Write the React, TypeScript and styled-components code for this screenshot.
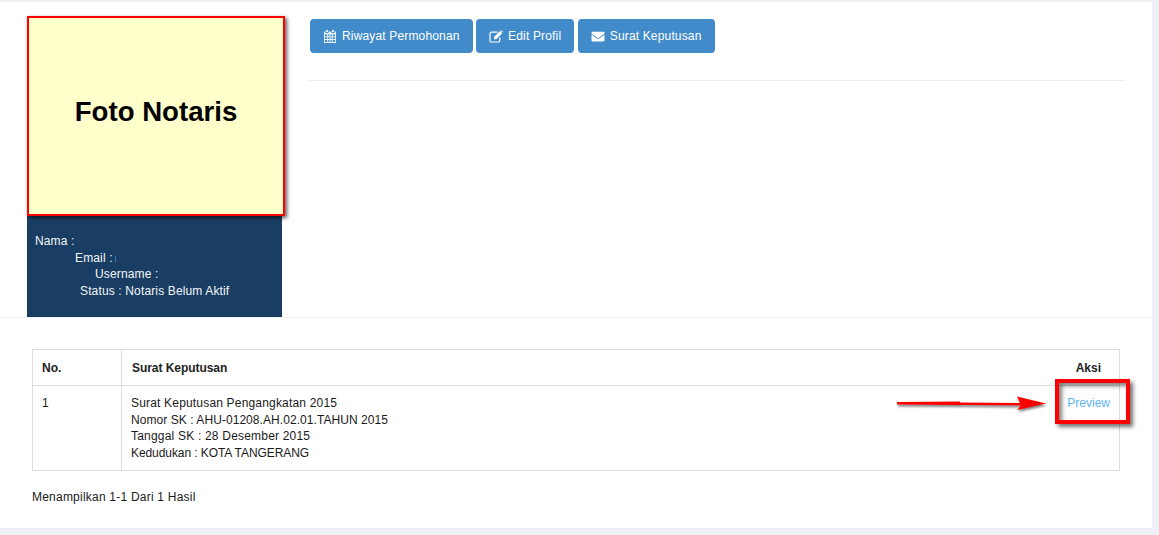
import React from "react";
import styled, { createGlobalStyle } from "styled-components";
import { FaEnvelope } from "react-icons/fa";

const GlobalStyle = createGlobalStyle`
  html, body {
    margin: 0;
    padding: 0;
    background: #f0f1f7;
  }
  body {
    font-family: "Liberation Sans", Arial, sans-serif;
    font-size: 12px;
    color: #1a1a1a;
  }
`;

const Page = styled.div`
  width: 1152px;
  height: 526px;
  margin-top: 2px;
  background: #fff;
`;

const ProfileSection = styled.section`
  display: flex;
  height: 315px;
  padding-left: 27px;
  border-bottom: 1px solid #f1f1f1;
`;

const SideColumn = styled.div`
  width: 255px;
  height: 315px;
  display: flex;
  flex-direction: column;
  padding-top: 14px;
  box-sizing: border-box;
`;

const Photo = styled.div`
  width: 258px;
  height: 200px;
  flex: none;
  box-sizing: border-box;
  border: 2px solid #ff0000;
  background: #ffffcc;
  box-shadow: 2px 2px 4px rgba(0, 0, 0, 0.65);
  display: flex;
  align-items: center;
  justify-content: center;
  padding-bottom: 8px;
  font-size: 27.6px;
  font-weight: 700;
  color: #000;
  position: relative;
  z-index: 1;
`;

const Identity = styled.div`
  flex: 1;
  background: #1a3e63;
  color: #f2f5f8;
  padding-top: 17px;
  line-height: 16.5px;
  letter-spacing: 0.14px;
`;

const IdentityLine = styled.div<{ $indent: number }>`
  padding-left: ${(p) => p.$indent}px;
`;

const Dot = styled.span`
  display: inline-block;
  width: 1px;
  height: 6px;
  margin-left: 2px;
  background: #2a78c8;
`;

const MainColumn = styled.div`
  flex: 1;
  padding: 17px 27px 0 26px;
`;

const Toolbar = styled.div`
  display: flex;
  gap: 3.5px;
  padding-left: 2px;
`;

const Button = styled.button`
  height: 34px;
  padding: 0 13px;
  border: 0;
  border-radius: 4px;
  background: #428bca;
  color: #fff;
  font: 12px "Liberation Sans", Arial, sans-serif;
  letter-spacing: 0.16px;
  display: flex;
  align-items: center;
  gap: 5px;
  svg {
    width: 14px;
    height: 13px;
    flex: none;
  }
`;

const Divider = styled.hr`
  margin: 27px 0 0;
  border: 0;
  border-top: 1px solid #eeeeee;
`;

const ListSection = styled.section`
  padding: 31px 32px 0;
  position: relative;
`;

const Table = styled.table`
  width: 1088px;
  border-collapse: collapse;
  border: 1px solid #dddddd;
  td, th {
    border: 1px solid #dddddd;
    padding: 0 9px;
    text-align: left;
    vertical-align: top;
    line-height: 16.5px;
  }
  th {
    height: 36px;
    padding-top: 2px;
    box-sizing: border-box;
    vertical-align: middle;
    font-weight: 700;
    color: #222;
  }
  td {
    padding-top: 9px;
    padding-bottom: 9px;
  }
`;

const NoCell = styled.th`
  width: 89px;
`;

const TitleHead = styled.th`
  && {
    border-right: 0;
    padding-left: 10px;
    letter-spacing: -0.05px;
  }
`;

const ActionHead = styled.th`
  && {
    border-left: 0;
    text-align: right;
    padding-right: 18px;
  }
`;

const TitleCell = styled.td`
  && {
    border-right: 0;
  }
`;

const ActionCell = styled.td`
  && {
    border-left: 0;
    text-align: right;
    padding-right: 9px;
  }
`;

const DetailLine = styled.div<{ $tracking: number }>`
  letter-spacing: ${(p) => p.$tracking}px;
`;

const PreviewLink = styled.a`
  color: #5bb5f0;
  text-decoration: none;
`;

const Summary = styled.p`
  margin: 19px 0 0;
  letter-spacing: 0.22px;
`;

const Highlight = styled.div`
  position: absolute;
  left: 1055px;
  top: 61px;
  width: 75px;
  height: 45px;
  box-sizing: border-box;
  border: 4px solid #ff0000;
  box-shadow: 3px 3px 4px rgba(0, 0, 0, 0.55), inset 3px 3px 4px rgba(0, 0, 0, 0.5);
`;

const Arrow = styled.svg`
  position: absolute;
  left: 895px;
  top: 76px;
  width: 155px;
  height: 20px;
  overflow: visible;
  filter: drop-shadow(1px 2px 1px rgba(0, 0, 0, 0.5));
`;

const CalendarIcon = () => (
  <svg viewBox="0 0 14 13" aria-hidden="true">
    <path
      fill="#fff"
      d="M3 0h2v2H3zM9 0h2v2H9zM1 1.5h1.5v1.5h3V1.5h3v1.5h3V1.5H13v11.5H1zM2 4.5v1.7h2.2V4.5zM5.2 4.5v1.7h1.3V4.5zM7.5 4.5v1.7h1.3V4.5zM9.8 4.5v1.7H12V4.5zM2 7.2v1.7h2.2V7.2zM5.2 7.2v1.7h1.3V7.2zM7.5 7.2v1.7h1.3V7.2zM9.8 7.2v1.7H12V7.2zM2 9.9V12h2.2V9.9zM5.2 9.9V12h1.3V9.9zM7.5 9.9V12h1.3V9.9zM9.8 9.9V12H12V9.9z"
      fillRule="evenodd"
      opacity="0.85"
    />
  </svg>
);

const EditIcon = () => (
  <svg viewBox="0 0 14 13" aria-hidden="true">
    <path
      fill="none"
      stroke="#fff"
      strokeWidth="1.2"
      d="M8.5 2.2H2.6A1.6 1.6 0 0 0 1 3.8v6.6A1.6 1.6 0 0 0 2.6 12h6.6a1.6 1.6 0 0 0 1.6-1.6V7.5"
    />
    <path fill="#fff" d="M5 7l6-6 2.2 2.2-6 6H5zM11.6.4l.6-.4 1.8 1.8-.4.6z" />
  </svg>
);

export default function App() {
  return (
    <>
      <GlobalStyle />
      <Page>
        <ProfileSection>
          <SideColumn>
            <Photo>Foto Notaris</Photo>
            <Identity>
              <IdentityLine $indent={8}>Nama :</IdentityLine>
              <IdentityLine $indent={48}>
                Email :<Dot />
              </IdentityLine>
              <IdentityLine $indent={68}>Username :</IdentityLine>
              <IdentityLine $indent={53}>Status : Notaris Belum Aktif</IdentityLine>
            </Identity>
          </SideColumn>
          <MainColumn>
            <Toolbar>
              <Button>
                <CalendarIcon />
                Riwayat Permohonan
              </Button>
              <Button>
                <EditIcon />
                Edit Profil
              </Button>
              <Button>
                <FaEnvelope />
                Surat Keputusan
              </Button>
            </Toolbar>
            <Divider />
          </MainColumn>
        </ProfileSection>
        <ListSection>
          <Table>
            <thead>
              <tr>
                <NoCell>No.</NoCell>
                <TitleHead>Surat Keputusan</TitleHead>
                <ActionHead>Aksi</ActionHead>
              </tr>
            </thead>
            <tbody>
              <tr>
                <td>1</td>
                <TitleCell>
                  <DetailLine $tracking={0.18}>Surat Keputusan Pengangkatan 2015</DetailLine>
                  <DetailLine $tracking={0.06}>Nomor SK : AHU-01208.AH.02.01.TAHUN 2015</DetailLine>
                  <DetailLine $tracking={0.2}>Tanggal SK : 28 Desember 2015</DetailLine>
                  <DetailLine $tracking={-0.08}>Kedudukan : KOTA TANGERANG</DetailLine>
                </TitleCell>
                <ActionCell>
                  <PreviewLink href="#">Preview</PreviewLink>
                </ActionCell>
              </tr>
            </tbody>
          </Table>
          <Summary>Menampilkan 1-1 Dari 1 Hasil</Summary>
          <Highlight />
          <Arrow viewBox="0 0 155 20">
            <path
              d="M2 8 L65 7.5 L65 8.5 L125 9 L122 2.5 L151 9.5 L122 16 L126 11.5 L65 11 L2 10.5 Z"
              fill="#ff0000"
            />
          </Arrow>
        </ListSection>
      </Page>
    </>
  );
}
